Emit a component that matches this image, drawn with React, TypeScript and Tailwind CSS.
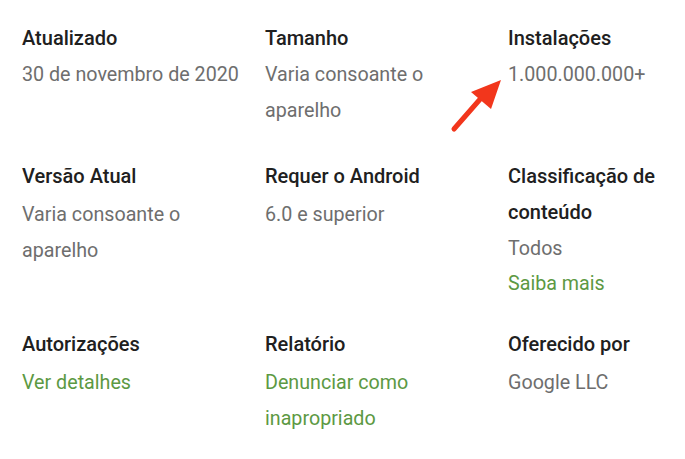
import React from "react";

type Cell = {
  title: string;
  gap?: boolean;
  lines: { text: string; link?: boolean; short?: boolean }[];
};

const rows: Cell[][] = [
  [
    { title: "Atualizado", lines: [{ text: "30 de novembro de 2020" }] },
    { title: "Tamanho", lines: [{ text: "Varia consoante o aparelho" }] },
    { title: "Instalações", lines: [{ text: "1.000.000.000+" }] },
  ],
  [
    { title: "Versão Atual", gap: true, lines: [{ text: "Varia consoante o aparelho" }] },
    { title: "Requer o Android", gap: true, lines: [{ text: "6.0 e superior" }] },
    {
      title: "Classificação de conteúdo",
      lines: [{ text: "Todos" }, { text: "Saiba mais", link: true, short: true }],
    },
  ],
  [
    { title: "Autorizações", gap: true, lines: [{ text: "Ver detalhes", link: true }] },
    { title: "Relatório", gap: true, lines: [{ text: "Denunciar como inapropriado", link: true }] },
    { title: "Oferecido por", gap: true, lines: [{ text: "Google LLC" }] },
  ],
];

export default function App() {
  return (
    <div
      className="relative w-[685px] h-[459px] bg-white overflow-hidden pl-[22px] pt-[20px]"
      style={{ fontFamily: "Roboto, 'Noto Sans', sans-serif" }}
    >
      <div className="flex flex-col">
        {rows.map((row, ri) => (
          <div
            key={ri}
            className={
              "grid grid-cols-[243px_243px_177px] " +
              (ri === 1 ? "mt-[29px]" : ri === 2 ? "mt-[25px]" : "")
            }
          >
            {row.map((c, ci) => (
              <div key={ci} className="flex flex-col">
                <div className="text-[20px] leading-[36px] font-medium text-[#202020]">
                  {c.title}
                </div>
                <div className={(c.gap ? "mt-[3px]" : "mt-[1px]") + " flex flex-col"}>
                  {c.lines.map((l, li) => (
                    <div
                      key={li}
                      className={
                        "text-[19.7px] pr-4 " +
                        (l.short ? "leading-[34px] " : "leading-[36px] ") +
                        (l.link ? "text-[#5c9943]" : "text-[#6e6e6e]")
                      }
                    >
                      {l.text}
                    </div>
                  ))}
                </div>
              </div>
            ))}
          </div>
        ))}
      </div>
      <svg
        className="absolute left-0 top-0"
        width="685"
        height="459"
        viewBox="0 0 685 459"
      >
        <line x1="454" y1="129" x2="482" y2="97" stroke="#f2361c" strokeWidth="5" strokeLinecap="round" />
        <polygon points="501,80 471,92 491,109" fill="#f2361c" />
      </svg>
    </div>
  );
}
